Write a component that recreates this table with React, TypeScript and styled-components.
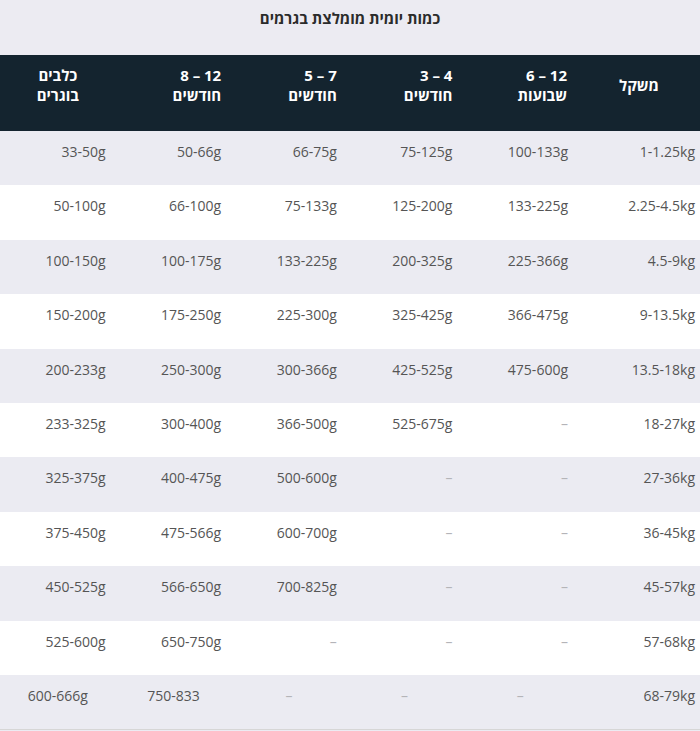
import React from "react";
import styled, { createGlobalStyle } from "styled-components";

const Global = createGlobalStyle`
  html, body { margin: 0; padding: 0; background: #ecebf2; }
  body { font-family: "Open Sans", "DejaVu Sans", sans-serif; }
`;

const Page = styled.div`
  width: 700px;
  direction: rtl;
  background: #ecebf2;
`;

const Title = styled.h2`
  margin: 0;
  height: 55px;
  box-sizing: border-box;
  padding-top: 7px;
  text-align: center;
  font-size: 15px;
  line-height: 22px;
  font-weight: 700;
  color: #2b2b2b;
`;

const Table = styled.div`
  display: grid;
  grid-template-columns: 122px repeat(5, 1fr);
  border-bottom: 1px solid #d6d6d6;
`;

const HeadCell = styled.div<{ $center?: boolean; $pad: number }>`
  background: #14242f;
  color: #fff;
  height: 76px;
  display: flex;
  flex-direction: column;
  justify-content: center;
  align-items: ${(p) => (p.$center ? "center" : "flex-start")};
  padding: 10px ${(p) => p.$pad}px 26px 0;
  box-sizing: border-box;
  font-size: 15px;
  font-weight: 700;
  line-height: 20px;
  text-align: ${(p) => (p.$center ? "center" : "right")};
`;

const Cell = styled.div<{ $alt: boolean; $center?: boolean; $pad: number; $muted?: boolean }>`
  background: ${(p) => (p.$alt ? "#ebebf2" : "#ffffff")};
  height: 54.4px;
  box-sizing: border-box;
  padding-top: 11px;
  padding-right: ${(p) => (p.$center ? 0 : p.$pad)}px;
  text-align: ${(p) => (p.$center ? "center" : "right")};
  font-size: 14px;
  line-height: 20px;
  color: ${(p) => (p.$muted ? "#b4b4b8" : "#555555")};
`;

const headers: { lines: string[]; center?: boolean; pad: number }[] = [
  { lines: ["משקל"], center: true, pad: 0 },
  { lines: ["12 – 6", "שבועות"], pad: 11 },
  { lines: ["4 – 3", "חודשים"], pad: 10 },
  { lines: ["7 – 5", "חודשים"], pad: 10 },
  { lines: ["12 – 8", "חודשים"], pad: 10 },
  { lines: ["כלבים", "בוגרים"], center: true, pad: 0 },
];

const D = "–";
const rows: string[][] = [
  ["1-1.25kg", "100-133g", "75-125g", "66-75g", "50-66g", "33-50g"],
  ["2.25-4.5kg", "133-225g", "125-200g", "75-133g", "66-100g", "50-100g"],
  ["4.5-9kg", "225-366g", "200-325g", "133-225g", "100-175g", "100-150g"],
  ["9-13.5kg", "366-475g", "325-425g", "225-300g", "175-250g", "150-200g"],
  ["13.5-18kg", "475-600g", "425-525g", "300-366g", "250-300g", "200-233g"],
  ["18-27kg", D, "525-675g", "366-500g", "300-400g", "233-325g"],
  ["27-36kg", D, D, "500-600g", "400-475g", "325-375g"],
  ["36-45kg", D, D, "600-700g", "475-566g", "375-450g"],
  ["45-57kg", D, D, "700-825g", "566-650g", "450-525g"],
  ["57-68kg", D, D, D, "650-750g", "525-600g"],
  ["68-79kg", D, D, D, "750-833", "600-666g"],
];

export default function App() {
  return (
    <>
      <Global />
      <Page>
        <Title>כמות יומית מומלצת בגרמים</Title>
        <Table>
          {headers.map((h, i) => (
            <HeadCell key={i} $center={h.center} $pad={h.pad}>
              {h.lines.map((l, j) => (
                <span key={j}>{l}</span>
              ))}
            </HeadCell>
          ))}
          {rows.map((r, ri) => {
            const last = ri === rows.length - 1;
            return r.map((v, ci) => (
              <Cell
                key={`${ri}-${ci}`}
                $alt={ri % 2 === 0}
                $center={last && ci > 0}
                $pad={ci === 0 ? 5 : 10}
                $muted={v === D}
              >
                {v}
              </Cell>
            ));
          })}
        </Table>
      </Page>
    </>
  );
}
